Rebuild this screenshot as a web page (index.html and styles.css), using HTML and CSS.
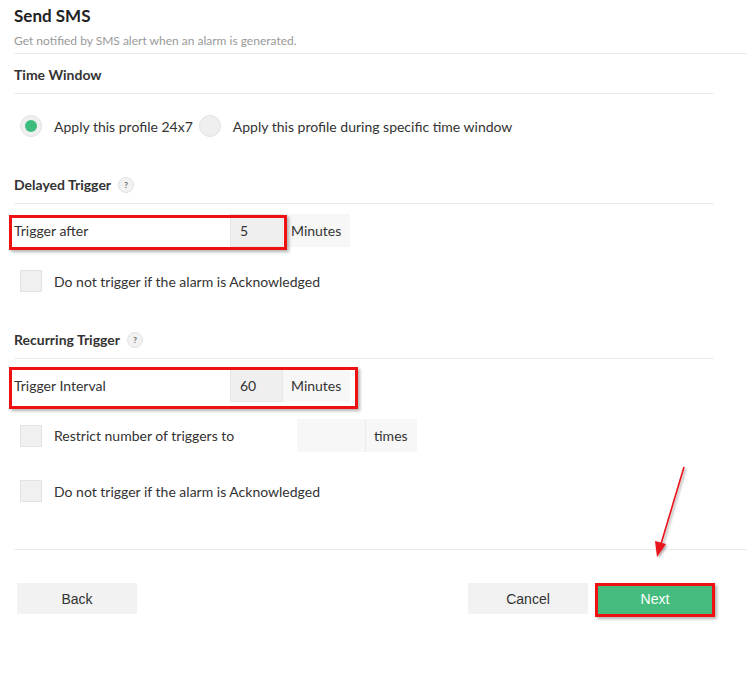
FILE: index.html
```html
<!DOCTYPE html>
<html>
<head>
<meta charset="utf-8">
<link rel="stylesheet" href="styles.css">
</head>
<body>
<div class="page">
  <header class="header">
    <h1 class="title">Send SMS</h1>
    <p class="subtitle">Get notified by SMS alert when an alarm is generated.</p>
  </header>

  <section class="section">
    <h2 class="section-title">Time Window</h2>
    <div class="radio-row">
      <label class="radio"><span class="radio-dot checked"></span><span>Apply this profile 24x7</span></label>
      <label class="radio"><span class="radio-dot"></span><span>Apply this profile during specific time window</span></label>
    </div>
  </section>

  <section class="section">
    <h2 class="section-title">Delayed Trigger <span class="help">?</span></h2>
    <div class="field-row first">
      <span class="field-label">Trigger after</span>
      <span class="value-box">5</span>
      <span class="unit-box">Minutes</span>
      <span class="mark mark-a"></span>
    </div>
    <div class="check-row">
      <span class="checkbox"></span><span>Do not trigger if the alarm is Acknowledged</span>
    </div>
  </section>

  <section class="section">
    <h2 class="section-title">Recurring Trigger <span class="help">?</span></h2>
    <div class="field-row first">
      <span class="field-label">Trigger Interval</span>
      <span class="value-box">60</span>
      <span class="unit-box">Minutes</span>
      <span class="mark mark-b"></span>
    </div>
    <div class="check-row restrict">
      <span class="checkbox"></span><span class="restrict-label">Restrict number of triggers to</span>
      <span class="count-box"></span><span class="times-box">times</span>
    </div>
    <div class="check-row last">
      <span class="checkbox"></span><span>Do not trigger if the alarm is Acknowledged</span>
    </div>
  </section>

  <footer class="footer">
    <button class="btn">Back</button>
    <div class="footer-right">
      <button class="btn">Cancel</button>
      <button class="btn btn-primary">Next<span class="mark mark-c"></span></button>
    </div>
  </footer>

  <svg class="arrow" width="60" height="110" viewBox="0 0 60 110">
    <defs>
      <filter id="sh" x="-50%" y="-50%" width="200%" height="200%">
        <feDropShadow dx="1.5" dy="1.5" stdDeviation="1.2" flood-color="#000" flood-opacity="0.35"/>
      </filter>
    </defs>
    <g filter="url(#sh)">
      <line x1="44" y1="7" x2="21" y2="84" stroke="#e8141b" stroke-width="1.6"/>
      <polygon points="17,97 15,81 26,84" fill="#e8141b"/>
    </g>
  </svg>
</div>
</body>
</html>
```

FILE: styles.css
```css
* { box-sizing: border-box; }

body {
  margin: 0;
  background: #fff;
  font-family: Lato, "Open Sans", sans-serif;
  font-size: 14px;
  color: #333;
}

.page {
  position: relative;
  width: 747px;
  height: 675px;
  padding-left: 14px;
}

.header {
  border-bottom: 1px solid #ebebeb;
  padding-top: 4px;
  padding-bottom: 5px;
}

.title {
  margin: 0;
  font-size: 17px;
  font-weight: 700;
  line-height: 24px;
  color: #222;
}

.subtitle {
  margin: 6px 0 0;
  font-size: 12px;
  line-height: 14px;
  color: #999;
}

.section {
  width: 700px;
}

.section-title {
  margin: 0;
  padding: 12px 0 9px;
  font-size: 14px;
  line-height: 18px;
  font-weight: 700;
  color: #333;
  border-bottom: 1px solid #ebebeb;
  display: flex;
  align-items: center;
  gap: 7px;
}

.help {
  width: 16px;
  height: 16px;
  border-radius: 50%;
  background: #f2f2f2;
  border: 1px solid #e2e2e2;
  font-size: 8px;
  font-weight: 700;
  color: #666;
  display: inline-flex;
  align-items: center;
  justify-content: center;
  line-height: 1;
}

.radio-row {
  margin-top: 21px;
  margin-bottom: 27px;
  padding-left: 6px;
  display: flex;
  align-items: center;
  gap: 6px;
  height: 22px;
}

.radio {
  display: flex;
  align-items: center;
  gap: 12px;
}

.radio-dot {
  width: 22px;
  height: 22px;
  border-radius: 50%;
  background: #efefef;
  border: 1px solid #e2e2e2;
  display: flex;
  align-items: center;
  justify-content: center;
}

.radio-dot.checked::after {
  content: "";
  width: 12px;
  height: 12px;
  border-radius: 50%;
  background: #3dbd7d;
}

.field-row {
  position: relative;
  display: flex;
  height: 33px;
  align-items: stretch;
  margin-top: 10px;
}

.field-label {
  width: 216px;
  display: flex;
  align-items: center;
}

.value-box {
  width: 53px;
  background: #efefef;
  border: 1px solid #e6e6e6;
  display: flex;
  align-items: center;
  padding-left: 9px;
}

.unit-box {
  width: 67px;
  background: #f7f7f7;
  display: flex;
  align-items: center;
  padding-left: 8px;
}

.mark {
  position: absolute;
  border: 3px solid #ee1111;
  box-shadow: 2px 2px 3px rgba(0, 0, 0, 0.3);
  pointer-events: none;
}

.mark-a {
  left: -5px;
  top: 1px;
  width: 278px;
  height: 35px;
}

.mark-b {
  left: -5px;
  top: -2px;
  width: 349px;
  height: 42px;
}

.check-row {
  display: flex;
  align-items: center;
  height: 22px;
  margin-top: 23px;
  margin-bottom: 27px;
  padding-left: 6px;
  gap: 12px;
}

.checkbox {
  width: 22px;
  height: 22px;
  background: #f0f0f0;
  border: 1px solid #e2e2e2;
  flex: none;
}

.check-row.restrict {
  height: 33px;
  margin-top: 17px;
  margin-bottom: 0;
}

.restrict-label {
  width: 243px;
  flex: none;
}

.count-box {
  width: 69px;
  height: 33px;
  background: #f7f7f7;
  border-right: 1px solid #ececec;
  flex: none;
}

.restrict .count-box { margin-left: -12px; }

.times-box {
  width: 51px;
  height: 33px;
  background: #f7f7f7;
  display: flex;
  align-items: center;
  padding-left: 8px;
  margin-left: -12px;
  flex: none;
}

.check-row.last {
  margin-top: 28px;
  margin-bottom: 47px;
}

.footer {
  border-top: 1px solid #ebebeb;
  padding-top: 33px;
  padding-left: 3px;
  padding-right: 32px;
  display: flex;
  justify-content: space-between;
}

.footer-right {
  display: flex;
  gap: 7px;
}

.btn {
  position: relative;
  width: 120px;
  height: 31px;
  border: none;
  background: #f2f2f2;
  color: #333;
  font-family: "Liberation Sans", Arial, sans-serif;
  font-size: 14px;
  padding: 0;
}

.btn-primary {
  background: #45bc7d;
  color: #fff;
}

.mark-c {
  left: 0;
  top: 0;
  width: 120px;
  height: 34px;
}

.arrow {
  position: absolute;
  left: 640px;
  top: 460px;
}
```
